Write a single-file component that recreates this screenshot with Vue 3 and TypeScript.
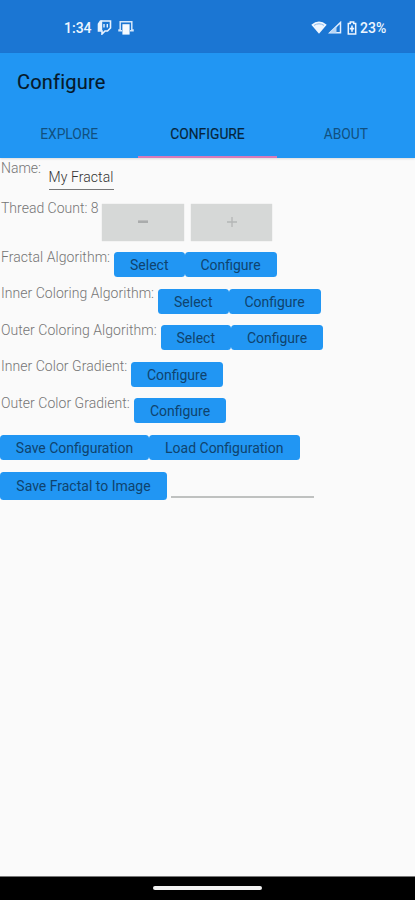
<script setup lang="ts">
import { ref } from 'vue'

interface SettingRow {
  id: string
  label: string
  actions: string[]
}

const tabs = ['Explore', 'Configure', 'About']
const activeTab = ref('Configure')
const name = ref('My Fractal')
const threads = ref(8)

const settings: SettingRow[] = [
  { id: 'fractal', label: 'Fractal Algorithm:', actions: ['Select', 'Configure'] },
  { id: 'inner-algorithm', label: 'Inner Coloring Algorithm:', actions: ['Select', 'Configure'] },
  { id: 'outer-algorithm', label: 'Outer Coloring Algorithm:', actions: ['Select', 'Configure'] },
  { id: 'inner-gradient', label: 'Inner Color Gradient:', actions: ['Configure'] },
  { id: 'outer-gradient', label: 'Outer Color Gradient:', actions: ['Configure'] },
]
</script>

<template>
  <div class="screen">
    <header class="status">
      <span class="clock">1:34</span>
      <svg class="twitch" width="15" height="15" viewBox="0 0 15 15">
        <path d="M3.5 1H13.5V8L10.5 11H8L5 14V11H1.5V4Z" fill="none" stroke="#e9f3ff" stroke-width="1.6" />
        <path d="M2 4L4.5 1.5V10H2ZM7 4V7.5M10.3 4V7.5" fill="#e9f3ff" stroke="#e9f3ff" stroke-width="1.4" />
      </svg>
      <svg class="cast" width="16" height="15" viewBox="0 0 16 15">
        <path d="M4 10.8H1V10H2.2V1.7H13.8V10H15V10.8H12" fill="none" stroke="#d5e7fb" stroke-width="1.5" />
        <rect x="4.4" y="4.2" width="7.2" height="10.4" fill="#f5faff" />
      </svg>
      <span class="spacer"></span>
      <svg width="16" height="13" viewBox="0 0 16 13">
        <path d="M.3 3.8Q8-2.6 15.7 3.8L8 12.7Z" fill="#eef6ff" />
        <path d="M3 4.4Q8 1.2 13 4.4" fill="none" stroke="#8dbbed" stroke-width="1" />
      </svg>
      <svg class="signal" width="14" height="13" viewBox="0 0 14 13">
        <path d="M1.8 11.8L12.5 1.5V11.8Z" fill="none" stroke="#e4f0ff" stroke-width="1.5" />
        <path d="M1.8 11.8L8.5 5.5V11.8Z" fill="#b5d4f5" />
      </svg>
      <svg class="battery" width="10" height="14" viewBox="0 0 10 14">
        <path d="M3.3 1H6.7V2.5H8.7V13H1.3V2.5H3.3Z" fill="none" stroke="#eef6ff" stroke-width="1.5" />
        <path d="M5 4.4V10.8M2.8 7.6H7.2" stroke="#eef6ff" stroke-width="1.6" />
      </svg>
      <span class="percent">23%</span>
    </header>

    <div class="appbar">
      <h1>Configure</h1>
      <nav>
        <button
          v-for="tab in tabs"
          :key="tab"
          class="tab"
          :class="{ active: tab === activeTab }"
          @click="activeTab = tab"
        >{{ tab }}</button>
      </nav>
    </div>

    <main>
      <div class="row name-row">
        <label for="name">Name:</label>
        <input id="name" v-model="name" class="name-input" />
      </div>
      <div class="row thread-row">
        <span class="thread-label">Thread Count: {{ threads }}</span>
        <button class="step" aria-label="Decrease" @click="threads--">
          <svg width="12" height="12" viewBox="0 0 12 12"><path d="M1 5.7H11" stroke="#aaacac" stroke-width="2.6" /></svg>
        </button>
        <button class="step plus" aria-label="Increase" @click="threads++">
          <svg width="12" height="12" viewBox="0 0 12 12"><path d="M1 6H11M6 1V11" stroke="#b4b6b6" stroke-width="1.3" /></svg>
        </button>
      </div>
      <div v-for="item in settings" :key="item.id" class="row setting" :class="item.id">
        <span class="label">{{ item.label }}</span>
        <button v-for="action in item.actions" :key="action" class="btn" :class="action.toLowerCase()">{{ action }}</button>
      </div>
      <div class="row setting">
        <button class="btn save">Save Configuration</button>
        <button class="btn load">Load Configuration</button>
      </div>
      <div class="row setting">
        <button class="btn image">Save Fractal to Image</button>
        <input class="file-input" aria-label="File name" />
      </div>
    </main>

    <footer><span class="handle"></span></footer>
  </div>
</template>

<style>
body {
  margin: 0;
  background: #fafafa;
}
</style>

<style scoped>
.screen {
  width: 415px;
  height: 900px;
  display: flex;
  flex-direction: column;
  background: #fafafa;
  font-family: Roboto, sans-serif;
  overflow: hidden;
}
button, input {
  font-family: inherit;
  border: 0;
  padding: 0;
  margin: 0;
  border-radius: 0;
  outline: 0;
  box-sizing: border-box;
}
.status {
  flex: none;
  height: 53px;
  box-sizing: border-box;
  background: #1b76d3;
  color: #eef6ff;
  display: flex;
  align-items: center;
  padding: 2px 27px 0 64px;
  font-size: 14px;
  font-weight: 500;
}
.clock { width: 26px; white-space: nowrap; }
.twitch { margin-left: 7px; }
.cast { margin-left: 6px; }
.spacer { flex: 1; }
.signal { margin-left: 1px; }
.battery { margin-left: 5px; }
.percent { width: 28px; margin-left: 3px; white-space: nowrap; }
.appbar {
  flex: none;
  height: 104.5px;
  background: #2196f3;
  box-shadow: 0 1px 2px rgba(0, 0, 0, 0.12);
  display: flex;
  flex-direction: column;
}
h1 {
  margin: 0;
  padding: 1px 0 0 17px;
  height: 57px;
  box-sizing: border-box;
  line-height: 56px;
  font-size: 20px;
  font-weight: 400;
  -webkit-text-stroke: 0.15px #06192a;
  color: #06192a;
  letter-spacing: 0.2px;
}
nav {
  display: grid;
  grid-template-columns: 1fr 1fr 1fr;
  flex: 1;
}
.tab {
  background: none;
  font-size: 13.8px;
  text-transform: uppercase;
  color: #11507f;
  border-bottom: 2px solid transparent;
  padding-top: 2px;
}
.tab.active {
  color: #06243b;
  border-bottom-color: #d77bb9;
  -webkit-text-stroke: 0.15px currentColor;
}
main {
  flex: 1;
  padding-top: 0.5px;
  color: #757575;
  font-size: 14px;
  font-weight: 300;
  line-height: 18px;
}
.row {
  display: flex;
  align-items: flex-start;
  white-space: nowrap;
}
.name-row { height: 41px; }
.name-row label { width: 48.5px; padding: 1px 0 0 1px; box-sizing: border-box; }
.name-input {
  width: 65px;
  height: 31.5px;
  padding-top: 8px;
  background: none;
  border-bottom: 1px solid #777;
  color: #333;
  font-size: 14px;
  font-weight: 300;
  letter-spacing: 0.08px;
}
.thread-row { height: 48.5px; }
.thread-label { width: 102px; padding-left: 1px; box-sizing: border-box; }
.step {
  width: 82px;
  height: 37px;
  margin-top: 4.5px;
  background: #d6d8d7;
  box-shadow: 0 0 1px #cfcfcf;
  display: flex;
  align-items: center;
  justify-content: center;
}
.step.plus { margin-left: 7px; width: 81px; }
.setting { height: 36.6px; }
.label { padding-left: 1px; box-sizing: border-box; letter-spacing: 0.04px; }
.fractal .label { width: 114px; }
.inner-algorithm .label { width: 158px; }
.outer-algorithm .label { width: 160.5px; }
.inner-gradient .label { width: 131px; }
.outer-gradient .label { width: 134px; }
.btn {
  height: 25px;
  margin-top: 4.5px;
  padding-top: 1px;
  border-radius: 3.5px;
  background: #2196f3;
  color: #0f436e;
  font-size: 14px;
  font-weight: 400;
}
.select { width: 70.5px; }
.configure { width: 92px; }
.save { width: 149px; }
.load { width: 150.5px; }
.image { width: 167px; height: 28px; padding-top: 0; }
.file-input {
  width: 143px;
  height: 31px;
  margin-left: 4px;
  background: none;
  border-bottom: 2px solid #bfc1c0;
}
footer {
  flex: none;
  height: 24px;
  box-sizing: border-box;
  border-top: 1px solid #777;
  background: #000;
  display: flex;
  justify-content: center;
  padding-top: 9px;
}
.handle {
  width: 109px;
  height: 4px;
  border-radius: 2px;
  background: #f2f2f2;
}
</style>
